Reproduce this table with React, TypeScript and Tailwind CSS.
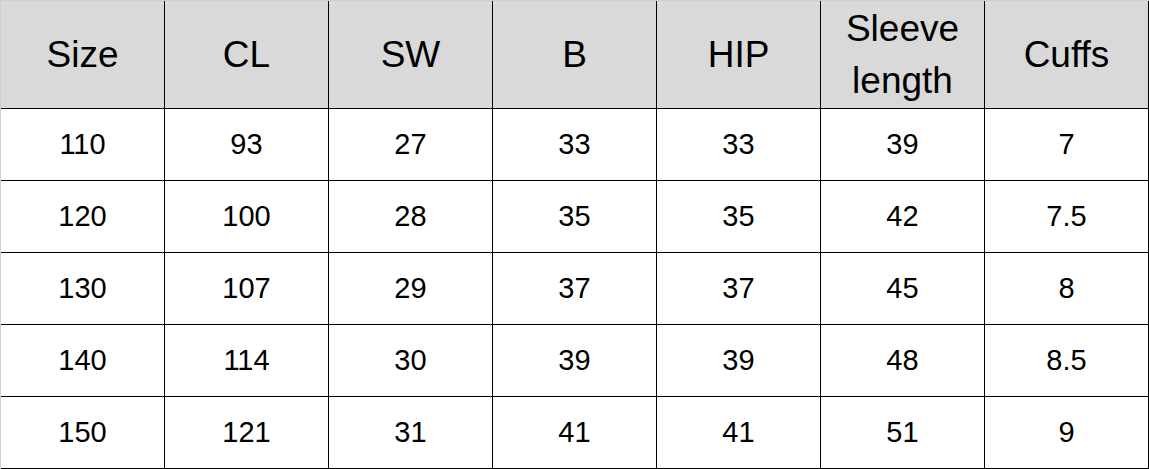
const headers = ["Size", "CL", "SW", "B", "HIP", "Sleeve length", "Cuffs"];

const rows = [
  ["110", "93", "27", "33", "33", "39", "7"],
  ["120", "100", "28", "35", "35", "42", "7.5"],
  ["130", "107", "29", "37", "37", "45", "8"],
  ["140", "114", "30", "39", "39", "48", "8.5"],
  ["150", "121", "31", "41", "41", "51", "9"],
];

export default function App() {
  return (
    <div className="w-[1149px] h-[469px] bg-white font-['Liberation_Sans',Arial,sans-serif] text-black">
      <div className="grid grid-cols-[repeat(7,164px)] border-l border-t border-[#d0d0d0] w-[1149px]">
        {headers.map((h) => (
          <div
            key={h}
            className="h-[108px] bg-[#d9d9d9] border-r border-b border-black flex items-center justify-center text-center text-[37px] leading-[52px] px-4"
          >
            {h}
          </div>
        ))}
        {rows.map((row, i) =>
          row.map((cell, j) => (
            <div
              key={`${i}-${j}`}
              className="h-[72px] border-r border-b border-black flex items-center justify-center text-[29px]"
            >
              {cell}
            </div>
          )),
        )}
      </div>
    </div>
  );
}
